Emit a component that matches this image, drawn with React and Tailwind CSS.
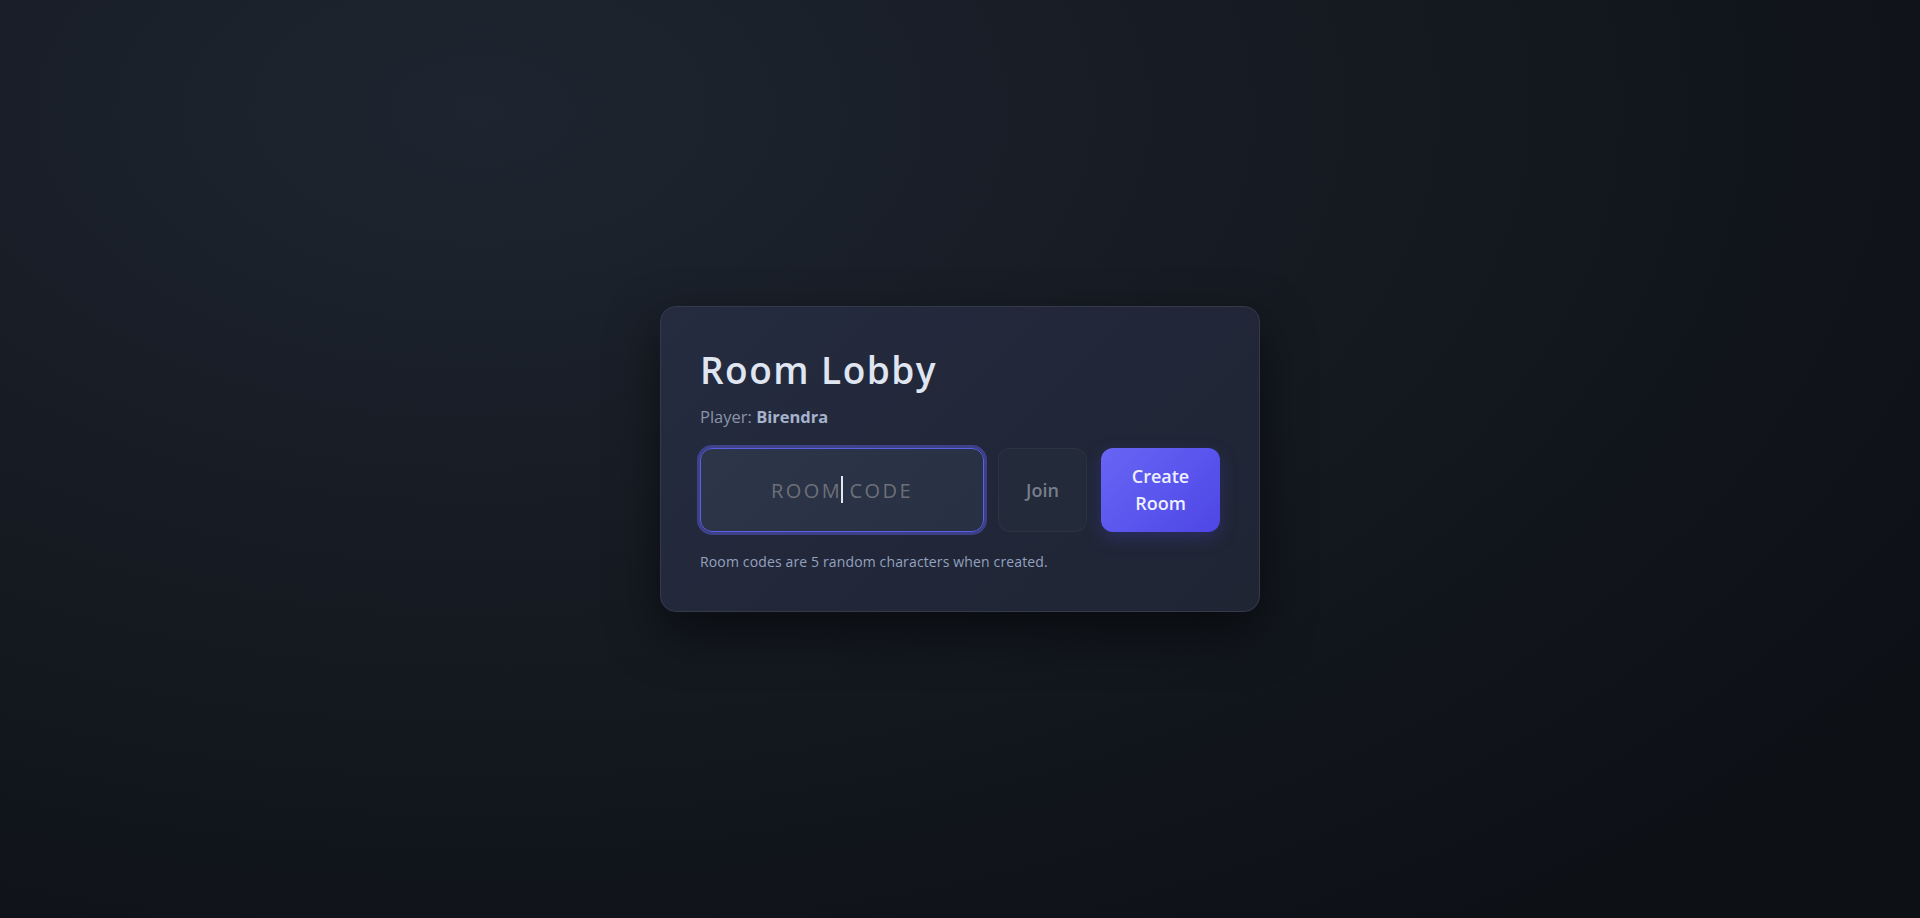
export default function App() {
  return (
    <div
      className="min-h-screen w-full flex items-center justify-center bg-[radial-gradient(ellipse_90%_110%_at_25%_12%,#1e2530_0%,#161b23_45%,#0d1015_100%)]"
      style={{ fontFamily: '"Open Sans", "Noto Sans", sans-serif' }}
    >
      <div className="w-[600px] rounded-2xl border border-[#333a4c] bg-[linear-gradient(135deg,#262c40_0%,#212738_55%,#1f2533_100%)] px-[39px] pt-[43px] pb-[39px] shadow-[0_20px_50px_rgba(0,0,0,0.55)]">
        <h1 className="text-[37px] leading-[40px] font-semibold tracking-[0.04em] text-[#dfe5f1]">Room Lobby</h1>
        <p className="mt-[15px] text-[16.5px] leading-[24px] text-[#8994aa]">
          Player: <span className="font-bold text-[#a6b3cd]">Birendra</span>
        </p>

        <div className="mt-[19px] flex gap-3.5 h-[84px]">
          <div className="relative flex-1">
            <input
              autoFocus
              placeholder="ROOM CODE"
              className="w-full h-full rounded-xl border border-[#5d60e6] bg-[linear-gradient(135deg,#2d3548_0%,#283043_100%)] px-4 text-center text-[20px] tracking-[0.12em] text-[#e2e8f0] placeholder:text-[#6d7079] caret-transparent outline-none ring-[3px] ring-[#5d60e6]/45"
            />
            <span className="pointer-events-none absolute left-1/2 top-[28px] h-[27px] w-[2px] -translate-x-1/2 bg-[#e2e8f0]" />
          </div>
          <button className="w-[89px] shrink-0 rounded-xl border border-white/[0.04] bg-[#232a39] text-lg font-semibold text-[#777e8d]">
            Join
          </button>
          <button className="w-[119px] shrink-0 rounded-xl bg-[linear-gradient(135deg,#6865f4_0%,#5a56ee_50%,#4f46e5_100%)] text-lg leading-[27px] font-semibold text-[#eef0ff] shadow-[0_6px_18px_rgba(79,70,229,0.25)]">
            Create
            <br />
            Room
          </button>
        </div>

        <p className="mt-[20px] text-[14px] leading-[20px] tracking-[0.01em] text-[#93a2bf]">
          Room codes are 5 random characters when created.
        </p>
      </div>
    </div>
  );
}
